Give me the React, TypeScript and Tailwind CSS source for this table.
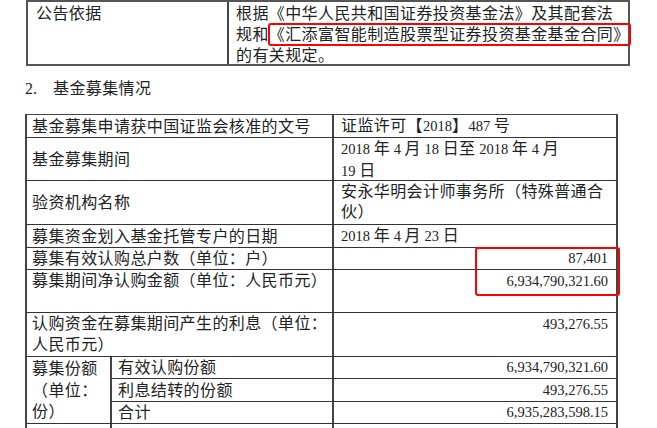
import React from "react";

const Num = ({ children }: { children: React.ReactNode }) => (
  <span className="text-[14.5px] tracking-normal">{children}</span>
);

const rowLine = "flex border-b border-[#333]";
const leftCell = "w-[307px] shrink-0 border-r-2 border-[#444] pl-[5px]";

const App = () => {
  return (
    <div className="h-[428px] w-[657px] overflow-hidden bg-white text-[16px] leading-[21px] tracking-[0.4px] text-[#222] font-['Liberation_Serif','Noto_Sans_CJK_SC',serif]">
      {/* 公告依据 */}
      <div className="ml-[26px] flex h-[66px] w-[604px] border-l-2 border-t-2 border-r-2 border-b-2 border-[#555]">
        <div className="w-[201px] shrink-0 border-r-2 border-[#444] pl-[8px] pt-[1px]">
          公告依据
        </div>
        <div className="whitespace-nowrap pl-[7px] pt-[1px]">
          <div>根据《中华人民共和国证券投资基金法》及其配套法</div>
          <div>
            规和
            <span className="inline-block h-[21px] rounded-[2px] outline-2 -outline-offset-1 outline-[#f00]">
              《汇添富智能制造股票型证券投资基金基金合同》
            </span>
          </div>
          <div>的有关规定。</div>
        </div>
      </div>

      {/* heading */}
      <div className="mt-[12px] flex h-[21px] items-center">
        <span className="ml-[25px] w-[28px] tracking-normal">2.</span>
        <span>基金募集情况</span>
      </div>

      {/* 基金募集情况 table */}
      <div className="relative ml-[25px] mt-[15px] w-[593px] border-l-2 border-t border-r-2 border-[#444]">
        <div className={`${rowLine} h-[23px]`}>
          <div className={`${leftCell} flex items-center`}>基金募集申请获中国证监会核准的文号</div>
          <div className="flex items-center pl-[7px]">
            <span>
              证监许可【<Num>2018</Num>】<Num>487 </Num>号
            </span>
          </div>
        </div>

        <div className={`${rowLine} h-[43px]`}>
          <div className={`${leftCell} flex items-center`}>基金募集期间</div>
          <div className="pl-[7px]">
            <div>
              <Num>2018 </Num>年<Num> 4 </Num>月<Num> 18 </Num>日至<Num> 2018 </Num>年<Num> 4 </Num>月
            </div>
            <div>
              <Num>19 </Num>日
            </div>
          </div>
        </div>

        <div className={`${rowLine} h-[44px]`}>
          <div className={`${leftCell} flex items-center`}>验资机构名称</div>
          <div className="pl-[7px] pt-[1px] leading-[20px]">
            <div>安永华明会计师事务所（特殊普通合</div>
            <div>伙）</div>
          </div>
        </div>

        <div className={`${rowLine} h-[23px]`}>
          <div className={`${leftCell} flex items-center`}>募集资金划入基金托管专户的日期</div>
          <div className="flex items-center pl-[7px]">
            <span>
              <Num>2018 </Num>年<Num> 4 </Num>月<Num> 23 </Num>日
            </span>
          </div>
        </div>

        <div className={`${rowLine} h-[22px]`}>
          <div className={`${leftCell} flex items-center`}>募集有效认购总户数（单位：户）</div>
          <div className="flex flex-1 items-center justify-end pr-[8px]">
            <Num>87,401</Num>
          </div>
        </div>

        <div className={`${rowLine} h-[43px]`}>
          <div className={leftCell}>募集期间净认购金额（单位：人民币元）</div>
          <div className="flex-1 pr-[8px] text-right">
            <Num>6,934,790,321.60</Num>
          </div>
        </div>

        <div className={`${rowLine} h-[44px]`}>
          <div className={leftCell}>
            <div>认购资金在募集期间产生的利息（单位：</div>
            <div>人民币元）</div>
          </div>
          <div className="flex-1 pr-[8px] text-right">
            <Num>493,276.55</Num>
          </div>
        </div>

        <div className={`${rowLine} h-[67px]`}>
          <div className="w-[85px] shrink-0 border-r-2 border-[#444] pl-[5px] pt-[1px] leading-[21.5px]">
            <div>募集份额</div>
            <div>（单位：</div>
            <div>份）</div>
          </div>
          <div className="flex flex-1 flex-col">
            <div className="flex h-[22px] border-b border-[#333]">
              <div className="flex w-[222px] shrink-0 items-center border-r-2 border-[#444] pl-[6px]">有效认购份额</div>
              <div className="flex flex-1 items-center justify-end pr-[8px]">
                <Num>6,934,790,321.60</Num>
              </div>
            </div>
            <div className="flex h-[23px] border-b border-[#333]">
              <div className="flex w-[222px] shrink-0 items-center border-r-2 border-[#444] pl-[6px]">利息结转的份额</div>
              <div className="flex flex-1 items-center justify-end pr-[8px]">
                <Num>493,276.55</Num>
              </div>
            </div>
            <div className="flex flex-1">
              <div className="flex w-[222px] shrink-0 items-center border-r-2 border-[#444] pl-[6px]">合计</div>
              <div className="flex flex-1 items-center justify-end pr-[8px]">
                <Num>6,935,283,598.15</Num>
              </div>
            </div>
          </div>
        </div>

        <div className="flex h-[160px]">
          <div className="flex w-[85px] shrink-0 items-center border-r-2 border-[#444] pl-[5px]">
            其中：募集期间基金管理人运用固有资金认购本基金情况
          </div>
          <div className="w-[222px] shrink-0 border-r-2 border-[#444] pl-[6px] pt-[2px]">
            认购的基金份额（单位：份）
          </div>
          <div className="flex flex-1 items-center justify-end pr-[8px]">
            <Num>0.00</Num>
          </div>
        </div>

        <div className="pointer-events-none absolute left-[448px] top-[132px] h-[49px] w-[145px] rounded-[3px] border-2 border-[#f00]" />
      </div>
    </div>
  );
};

export default App;
